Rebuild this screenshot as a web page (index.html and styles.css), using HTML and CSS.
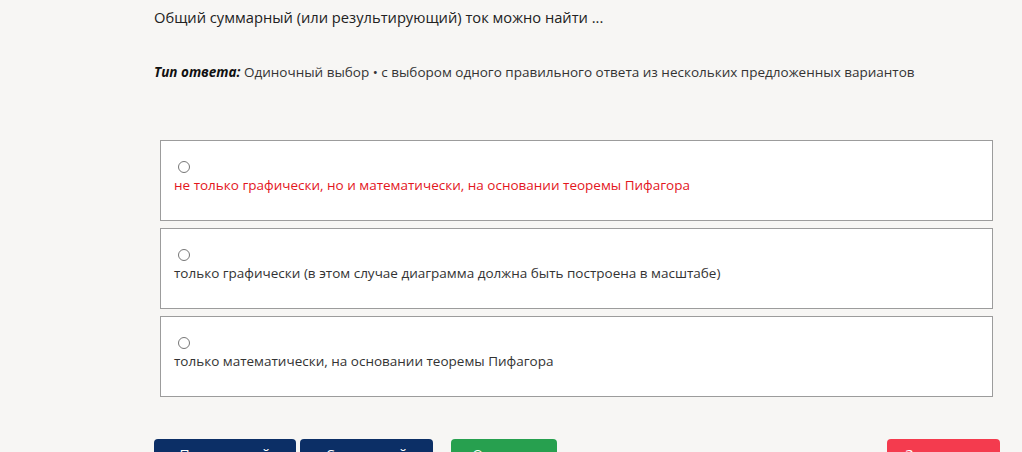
FILE: index.html
```html
<!DOCTYPE html>
<html lang="ru">
<head>
<meta charset="utf-8">
<link rel="stylesheet" href="styles.css">
</head>
<body>
<main class="page">
  <p class="question">Общий суммарный (или результирующий) ток можно найти ...</p>
  <p class="answer-type"><b><i>Тип ответа:</i></b> Одиночный выбор • с выбором одного правильного ответа из нескольких предложенных вариантов</p>

  <div class="options">
    <label class="option">
      <input type="radio" name="a" class="radio">
      <span class="option-text wrong">не только графически, но и математически, на основании теоремы Пифагора</span>
    </label>
    <label class="option">
      <input type="radio" name="a" class="radio">
      <span class="option-text">только графически (в этом случае диаграмма должна быть построена в масштабе)</span>
    </label>
    <label class="option">
      <input type="radio" name="a" class="radio">
      <span class="option-text">только математически, на основании теоремы Пифагора</span>
    </label>
  </div>

  <div class="actions">
    <button class="btn btn-nav btn-prev">Предыдущий</button>
    <button class="btn btn-nav btn-next">Следующий</button>
    <button class="btn btn-ok">Ответить</button>
    <button class="btn btn-end">Завершить</button>
  </div>
</main>
</body>
</html>
```

FILE: styles.css
```css
html, body {
  margin: 0;
  padding: 0;
  background: #f7f6f4;
  height: 452px;
  overflow: hidden;
}

.page {
  width: 846px;
  margin-left: 154px;
  padding-top: 6px;
  font-family: "Open Sans", "Noto Sans", sans-serif;
  color: #222;
}

.question {
  margin: 0;
  font-size: 14.7px;
  line-height: 22px;
}

.answer-type {
  margin: 34px 0 0;
  font-size: 13.5px;
  line-height: 20px;
  color: #333;
}

.answer-type b {
  color: #111;
}

.options {
  margin: 58px 7px 0 6px;
  display: flex;
  flex-direction: column;
  gap: 7px;
}

.option {
  box-sizing: border-box;
  height: 81px;
  background: #fff;
  border: 1px solid #9c9c9c;
  padding: 19px 13px 0;
  display: flex;
  flex-direction: column;
  align-items: flex-start;
}

.radio {
  width: 12px;
  height: 12px;
  margin: 1px 0 2px 4px;
}

.option-text {
  font-size: 13.5px;
  line-height: 20px;
  color: #333;
}

.option-text.wrong {
  color: #e3161d;
}

.actions {
  margin-top: 42px;
  display: flex;
  align-items: flex-start;
}

.btn {
  box-sizing: border-box;
  height: 38px;
  border: none;
  border-radius: 4px;
  color: #fff;
  font-family: "Open Sans", "Noto Sans", sans-serif;
  font-size: 14px;
  line-height: 20px;
  padding: 6px 12px 0;
  display: flex;
  justify-content: center;
  align-items: flex-start;
}

.btn-nav {
  background: #0c2f66;
}

.btn-prev {
  width: 142px;
}

.btn-next {
  width: 133px;
  margin-left: 4px;
}

.btn-ok {
  width: 106px;
  margin-left: 18px;
  background: #27a04f;
}

.btn-end {
  width: 113px;
  margin-left: auto;
  background: #f43b4e;
}
```
